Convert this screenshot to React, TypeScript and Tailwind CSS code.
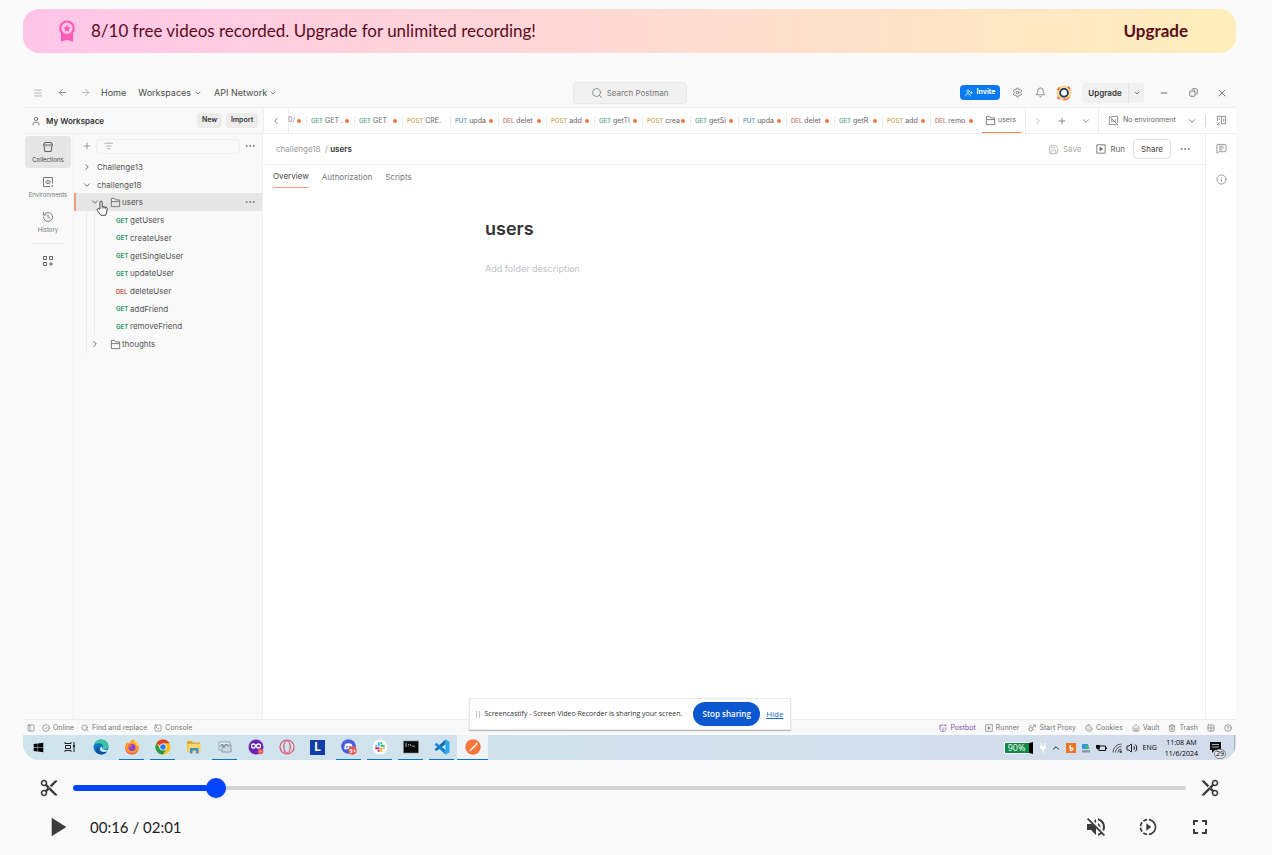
import React from "react";
import {
  ArrowLeft, ArrowRight, Bell, ChevronDown, ChevronLeft, ChevronRight, ChevronUp,
  CircleCheck, CircleHelp, Cookie, Copy, Ellipsis, Grid2x2, History, Info, ListFilter, Menu,
  MessageSquareText, Minus, PanelLeft, Plus, Save, Search, Settings, SquareTerminal, Trash2, User,
  UserPlus, Volume2, X, House,
} from "lucide-react";
import { MdContentCut, MdFullscreen, MdPlayArrow, MdSlowMotionVideo, MdVolumeOff } from "react-icons/md";
import { FaWindows } from "react-icons/fa";

type Method = "GET" | "POST" | "PUT" | "DEL";

const methodColor: Record<Method, string> = {
  GET: "text-[#4aa57c]",
  POST: "text-[#c9a24c]",
  PUT: "text-[#5a92cf]",
  DEL: "text-[#c9736b]",
};

const openTabs: { method: Method; name: string; dirty: boolean }[] = [
  { method: "GET", name: "GET .", dirty: true },
  { method: "GET", name: "GET", dirty: true },
  { method: "POST", name: "CRE.", dirty: false },
  { method: "PUT", name: "upda", dirty: true },
  { method: "DEL", name: "delet", dirty: true },
  { method: "POST", name: "add", dirty: true },
  { method: "GET", name: "getTl", dirty: true },
  { method: "POST", name: "crea", dirty: true },
  { method: "GET", name: "getSi", dirty: true },
  { method: "PUT", name: "upda", dirty: true },
  { method: "DEL", name: "delet", dirty: true },
  { method: "GET", name: "getR", dirty: true },
  { method: "POST", name: "add", dirty: true },
  { method: "DEL", name: "remo", dirty: true },
];

const requests: { method: Method; name: string }[] = [
  { method: "GET", name: "getUsers" },
  { method: "GET", name: "createUser" },
  { method: "GET", name: "getSingleUser" },
  { method: "GET", name: "updateUser" },
  { method: "DEL", name: "deleteUser" },
  { method: "GET", name: "addFriend" },
  { method: "GET", name: "removeFriend" },
];

const duration = 121;
const position = 14.7;

function Award() {
  return (
    <svg viewBox="0 0 18 22" className="h-[22px] w-[18px]">
      <path d="M3 13h12v8.500l-6-1.500-6 1.500z" fill="#ff5ab8" />
      <circle cx="9" cy="8.300" r="6.800" fill="#ffc5e4" stroke="#ff5ab8" strokeWidth="2.200" />
      <path d="M9 4.800l1.100 2.300 2.500.3-1.800 1.700.4 2.500L9 10.400l-2.200 1.200.4-2.500-1.800-1.700 2.500-.3z" fill="#ff5ab8" />
    </svg>
  );
}

function Avatar() {
  return (
    <svg viewBox="0 0 16 16" className="size-4">
      <circle cx="8" cy="8" r="7.500" fill="#f8d79a" />
      <circle cx="8" cy="7.800" r="3.900" fill="#fff" stroke="#173b57" strokeWidth="1.800" />
      <path d="M1.500 5l2-2.500M12 1.500l2 2.500M1.500 12l2 2" stroke="#f0653a" strokeWidth="1.800" />
      <path d="M7 13.500q4 1 6-2l.5 1.500q-3 3-6 2z" fill="#e8733a" />
    </svg>
  );
}

function CollectionIcon() {
  return (
    <svg viewBox="0 0 12 12" className="size-3" fill="none" stroke="#555" strokeWidth="0.900">
      <path d="M2.500 1.500h7l1 2.500h-9zM2 4l.8 6.500h6.400L10 4" />
    </svg>
  );
}

function EnvironmentIcon() {
  return (
    <svg viewBox="0 0 12 12" className="size-3" fill="none" stroke="#666" strokeWidth="0.900">
      <path d="M10.500 7.500v-6h-9v9H8" />
      <ellipse cx="6" cy="6" rx="2.200" ry="1.600" />
      <path d="M5.500 6h1M10.300 9v2" />
    </svg>
  );
}

function AppsIcon() {
  return (
    <svg viewBox="0 0 12 12" className="size-3" fill="none" stroke="#666" strokeWidth="1">
      <path d="M1.500 1.500h3v3h-3zM7.500 1.500h3v3h-3zM1.500 7.500h3v3h-3zM9 7v4M7 9h4" />
    </svg>
  );
}

function FolderTab() {
  return (
    <svg viewBox="0 0 12 12" className="size-[11px] shrink-0" fill="none" stroke="#666" strokeWidth="0.900">
      <path d="M1.500 10.500v-9h3.500l1.200 1.700h4.300v7.300zM1.500 5h9" />
    </svg>
  );
}

function NoEnvironmentIcon() {
  return (
    <svg viewBox="0 0 12 12" className="size-[11px]" fill="none" stroke="#777" strokeWidth="0.900">
      <path d="M1.500 2.500v8h8M3 1.500h7.500V9M1 1l10 10M4 4.500v3M8 4.500v3M5 7q1.500.8 2-.5" />
    </svg>
  );
}

function VariablesIcon() {
  return (
    <svg viewBox="0 0 12 12" className="size-[11px]" fill="none" stroke="#777" strokeWidth="0.900">
      <path d="M1.500 6.500v-5h9v8H6M6 1.500v8M3.500 3.500v2M8.500 3.500v4M1 8l3 3M4 8l-3 3" />
    </svg>
  );
}

function RunIcon({ className }: { className: string }) {
  return (
    <svg viewBox="0 0 12 12" className={className} fill="none" stroke="currentColor" strokeWidth="1">
      <path d="M1 1h10v10H1z" />
      <path d="M4.800 4v4l3-2z" fill="currentColor" />
    </svg>
  );
}

function PostbotIcon() {
  return (
    <svg viewBox="0 0 12 12" fill="none" stroke="currentColor" strokeWidth="1.100">
      <path d="M7 1.500A5 5 0 1 0 10.800 5M3 2l-1.500-.5V4M9.500.5v3M8 2h3" />
      <path d="M4.500 5.500v1.500M7.500 5.500v1.500M4.500 8.800h3" />
    </svg>
  );
}

function ProxyIcon() {
  return (
    <svg viewBox="0 0 12 12" fill="none" stroke="currentColor" strokeWidth="1.100">
      <circle cx="4" cy="8" r="2.800" />
      <path d="M6 6l4-4M7.500 1.500H11V5M1 4.500l2-2h2M9 7.500v2" />
    </svg>
  );
}

function HandCursor() {
  return (
    <svg viewBox="0 0 12 16" className="absolute left-5 top-[7px] z-10 h-4 w-3">
      <path
        d="M4 9V2.200a1.100 1.100 0 0 1 2.200 0V6.500l4 .8q1.100.3 1 1.500l-.7 4.200-1 2.300H5L1.200 10.500Q.6 9.200 1.800 8.800z"
        fill="#fff" stroke="#333" strokeWidth="0.900"
      />
      <path d="M6.200 6.500v2M7.900 7v1.600M9.500 7.300v1.500" stroke="#333" strokeWidth="0.700" />
    </svg>
  );
}

const appIcon = "size-4";

const taskbarApps: { name: string; running?: boolean; active?: boolean; icon: React.ReactNode }[] = [
  { name: "Start", icon: <FaWindows className="size-[11px] text-black" /> },
  {
    name: "Task view",
    icon: (
      <svg viewBox="0 0 12 12" className="size-3" fill="none" stroke="#222" strokeWidth="1">
        <path d="M1 1v1.500h6V1M1 11V9.500h6V11M1.500 4.500h5v3h-5zM10 1v10" />
        <path d="M9 4h2v2H9z" fill="#222" stroke="none" />
      </svg>
    ),
  },
  {
    name: "Edge",
    icon: (
      <svg viewBox="0 0 16 16" className={appIcon}>
        <circle cx="8" cy="8" r="7.500" fill="#1476c6" />
        <path d="M.6 7.500C1.200 3 4.300.5 8 .5c4.500 0 7.500 3 7.500 6.300 0 2.300-1.700 3.700-4 3.700-1.500 0-2.300-.6-2.300-1.200 0-.5.8-.8.8-2C10 5.500 8 4.300 5.700 4.300 3 4.300 1 6 .6 7.500z" fill="#3cc5a2" />
        <path d="M5.500 8.500c0 4 4.500 6 8.700 3.800-2 3.200-6 4-9 2.300C2 12.700 3 8 6 7.200c-.4.400-.5.8-.5 1.300z" fill="#0b4f9c" />
        <path d="M9.200 9.300c.5 1.500 3 2.300 6 1.200l-1.500 2c-3 1-6.700.2-6.700-2.300-.1-1.500 1-2.500 2.300-2.300 0 .8-.8 1-.1 1.400z" fill="#d2e8f1" />
      </svg>
    ),
  },
  {
    name: "Firefox",
    running: true,
    icon: (
      <svg viewBox="0 0 16 16" className={appIcon}>
        <path d="M8 15.300A7 7 0 0 1 1 8.500C1 6 2 4.500 3 3l.8 1.500L6 3.500C7 1.500 8.500.8 9.500.5 9.300 2 13 3 14.300 5.500 16.500 10 13.500 15.300 8 15.300z" fill="#ff9a2e" />
        <path d="M1 8c1 7 9 9 13 3-1 3-3.500 4.500-6 4.500-4 0-7-3-7-7.500z" fill="#f2385a" />
        <circle cx="8" cy="8.500" r="3.500" fill="#8146d9" />
        <path d="M4 6q3-1 5 1-3 0-3 2-2-1-2-3z" fill="#ff6a35" />
        <path d="M9.500.5c4 2 5.500 5 4.500 8-1-3-3-4-4.500-5.500z" fill="#ffd24a" />
      </svg>
    ),
  },
  {
    name: "Chrome",
    running: true,
    icon: (
      <svg viewBox="0 0 16 16" className={appIcon}>
        <circle cx="8" cy="8" r="7.500" fill="#fbc116" />
        <path d="M8 8L1.500 4.250A7.500 7.500 0 0 1 14.500 4.250H8z" fill="#e33b2e" />
        <path d="M1.500 4.250A7.500 7.500 0 0 0 8 15.500l3.200-5.600L8 8 4.800 9.900z" fill="#229a4b" />
        <circle cx="8" cy="8" r="3.600" fill="#fff" />
        <circle cx="8" cy="8" r="2.800" fill="#2b7de9" />
      </svg>
    ),
  },
  {
    name: "File Explorer",
    icon: (
      <svg viewBox="0 0 16 16" className={appIcon}>
        <path d="M1 2h5l1 1.500h7V13H1z" fill="#e6a92b" />
        <path d="M1.500 5h13v8.500h-13z" fill="#fbd766" />
        <path d="M4 14.500V9h8.500v5.500H10v-3H6.500v3z" fill="#3a8fd0" />
      </svg>
    ),
  },
  {
    name: "Monitor",
    running: true,
    icon: (
      <svg viewBox="0 0 16 16" className={appIcon}>
        <path d="M2 3h11v8H2z" fill="#e8edf0" stroke="#8a969e" strokeWidth="0.800" />
        <path d="M5 6h9v7H5z" fill="#cfd8de" stroke="#7f8c94" strokeWidth="0.800" />
        <path d="M3 8l2-3 2 4 2-4 3 3" fill="none" stroke="#5886a8" strokeWidth="0.900" />
      </svg>
    ),
  },
  {
    name: "Meet",
    icon: (
      <svg viewBox="0 0 16 16" className={appIcon}>
        <circle cx="8" cy="8" r="7.500" fill="#6b23b5" />
        <circle cx="5.500" cy="7" r="2" fill="none" stroke="#fff" strokeWidth="1.300" />
        <circle cx="10.500" cy="7" r="2" fill="none" stroke="#fff" strokeWidth="1.300" />
        <circle cx="12.500" cy="12.500" r="2.800" fill="#ec4f5a" />
        <circle cx="12.500" cy="12.500" r="1" fill="#ffc14d" />
      </svg>
    ),
  },
  {
    name: "Opera",
    icon: (
      <svg viewBox="0 0 16 16" className={appIcon} fill="none" stroke="#dc5570">
        <circle cx="8" cy="8" r="7" strokeWidth="1.200" />
        <ellipse cx="8" cy="8" rx="3.200" ry="6" strokeWidth="1.200" />
      </svg>
    ),
  },
  {
    name: "L",
    icon: (
      <span className="flex size-[15px] items-center justify-center bg-[#123cab] font-['Open_Sans',sans-serif] text-xs font-bold text-white">L</span>
    ),
  },
  {
    name: "Discord",
    running: true,
    icon: (
      <svg viewBox="0 0 16 16" className={appIcon}>
        <circle cx="7.500" cy="7.500" r="7.300" fill="#4c5ce0" />
        <path d="M4.500 4.800q3-1.200 6 0 1.500 2.500 1.300 5L10 11l-.7-1.200q-1.800.4-3.600 0L5 11l-1.800-1.200q-.2-2.500 1.300-5z" fill="#fff" />
        <circle cx="6" cy="7.800" r="0.900" fill="#4c5ce0" />
        <circle cx="9" cy="7.800" r="0.900" fill="#4c5ce0" />
        <circle cx="11.500" cy="11.500" r="4.300" fill="#e9574e" />
        <path d="M9 10.500h1.800v3H9M9 10.500v1.500h1.800M12.300 12h2.600M13.600 10.700v2.600" fill="none" stroke="#fff" strokeWidth="0.800" />
      </svg>
    ),
  },
  {
    name: "Slack",
    running: true,
    icon: (
      <svg viewBox="0 0 16 16" className={appIcon} strokeWidth="1.900" strokeLinecap="round">
        <circle cx="8" cy="8" r="7.500" fill="#fff" />
        <path d="M6.700 4v2.700M4 6.700h.2" stroke="#36c5f0" />
        <path d="M9.300 6.700H12M9.300 4v.2" stroke="#2eb67d" />
        <path d="M9.300 9.300V12M12 9.300h-.2" stroke="#ecb22e" />
        <path d="M4 9.300h2.700M6.700 12v-.2" stroke="#e01e5a" />
      </svg>
    ),
  },
  {
    name: "Command Prompt",
    running: true,
    icon: (
      <svg viewBox="0 0 16 16" className={appIcon}>
        <path d="M.5 2h15v12H.5z" fill="#0a0a0a" stroke="#888" strokeWidth="0.600" />
        <path d="M2 5h2M2 7h2M5.500 5v.8M5.500 6.500v.8M7 5l1 2.200M9 7.200h2.500" stroke="#ddd" strokeWidth="0.800" />
      </svg>
    ),
  },
  {
    name: "Visual Studio Code",
    running: true,
    icon: (
      <svg viewBox="0 0 16 16" className={appIcon}>
        <path d="M11.500.5L15.500 2.500v11l-4 2z" fill="#2aa7ee" />
        <path d="M11.500.5v4.800L2.500 12 .5 10.500z" fill="#0f6fb8" />
        <path d="M11.500 15.500v-4.800L2.500 4 .5 5.500z" fill="#1286d2" />
      </svg>
    ),
  },
  {
    name: "Postman",
    running: true,
    active: true,
    icon: (
      <svg viewBox="0 0 16 16" className={appIcon}>
        <circle cx="8" cy="8" r="7.700" fill="#f9763a" />
        <path d="M3.500 12.500l6.500-7 1.500 1L6 11.500zM10.300 5l1.200-1.400 1.300 1.300-1.200 1.400z" fill="#fff" />
      </svg>
    ),
  },
];

function RailItem({ label, active, children }: { label: string; active?: boolean; children: React.ReactNode }) {
  return (
    <button
      className={`flex h-8 w-[46px] flex-col items-center justify-center gap-[3px] rounded-sm text-[6px] leading-[8px] ${
        active ? "bg-[#e6e6e6] text-[#444]" : "text-[#777]"
      }`}
    >
      {children}
      {label}
    </button>
  );
}

function TitleBar() {
  return (
    <header className="flex h-[30px] shrink-0 items-center justify-between border-b border-[#eeeeee] text-[9px]">
      <nav className="flex flex-1 items-center text-[#4a4a4a]">
        <button aria-label="Menu" className="ml-2.5"><Menu className="size-2.5 text-[#888]" strokeWidth={1.5} /></button>
        <button aria-label="Back" className="ml-3.5"><ArrowLeft className="size-[11px] text-[#777]" strokeWidth={1.8} /></button>
        <button aria-label="Forward" className="ml-3"><ArrowRight className="size-[11px] text-[#aaa]" strokeWidth={1.8} /></button>
        <a href="#home" className="ml-2.5">Home</a>
        <button className="ml-3 flex items-center gap-[3px]">Workspaces <ChevronDown className="size-2" /></button>
        <button className="ml-3 flex items-center gap-0.5">API Network <ChevronDown className="size-2" /></button>
      </nav>
      <button className="flex h-[22px] w-[114px] items-center justify-center gap-1 rounded-sm border border-[#e9e9e9] bg-[#f1f1f1] text-[8px] text-[#777]">
        <Search className="size-3" strokeWidth={1.5} />
        Search Postman
      </button>
      <div className="flex flex-1 items-center justify-end">
        <button className="flex h-[15px] w-10 items-center justify-center gap-1 rounded-sm bg-[#0a7bee] text-[7px] font-bold text-white">
          <UserPlus className="size-2" /> Invite
        </button>
        <button aria-label="Settings" className="ml-3"><Settings className="size-[11px] text-[#666]" strokeWidth={1.6} /></button>
        <button aria-label="Notifications" className="ml-3"><Bell className="size-[11px] text-[#666]" strokeWidth={1.6} /></button>
        <span className="ml-2.5"><Avatar /></span>
        <button className="ml-2.5 h-5 w-[46px] rounded-l-sm bg-[#f1f1f1] text-[8px] font-semibold text-[#333]">Upgrade</button>
        <button aria-label="Upgrade options" className="flex h-5 w-4 items-center justify-center rounded-r-sm border-l border-[#e2e2e2] bg-[#f1f1f1]">
          <ChevronDown className="size-2 text-[#444]" />
        </button>
        <button aria-label="Minimize" className="ml-[15px]"><Minus className="size-2.5 text-[#555]" /></button>
        <button aria-label="Restore" className="ml-5"><Copy className="size-[9px] -scale-x-100 text-[#555]" /></button>
        <button aria-label="Close" className="ml-[18px] mr-2"><X className="size-3 text-[#555]" strokeWidth={1.6} /></button>
      </div>
    </header>
  );
}

function TabStrip() {
  return (
    <div className="flex h-[26px] shrink-0 border-b border-[#eeeeee]">
      <div className="flex w-60 shrink-0 items-center gap-1 pl-2 pr-[5px]">
        <User className="size-2.5 text-[#555]" strokeWidth={1.8} />
        <span className="flex-1 pl-px text-[8px] font-semibold leading-3 text-[#333]">My Workspace</span>
        <button className="h-[15px] w-[25px] rounded-sm bg-[#ececec] text-[7px] font-semibold text-[#333]">New</button>
        <button className="h-[15px] w-8 rounded-sm bg-[#ececec] text-[7px] font-semibold text-[#333]">Import</button>
      </div>
      <div className="flex min-w-0 flex-1 items-center bg-white">
        <button aria-label="Previous tabs" className="flex h-full w-[26px] shrink-0 items-center justify-center border-x border-[#efefef]">
          <ChevronLeft className="size-2.5 text-[#666]" />
        </button>
        <div className="flex w-[17px] shrink-0 items-center justify-end gap-0.5 pr-[5px] text-[7px] text-[#888]">
          <span>0/</span>
          <i className="size-1 shrink-0 rounded-full bg-[#f3733a]" />
        </div>
        {openTabs.map((tab, i) => (
          <button key={i} className="flex h-3 w-12 shrink-0 items-center border-l border-[#ededed] pl-1 pr-[5px]">
            <span className={`mr-0.5 text-[6px] font-medium ${methodColor[tab.method]}`}>{tab.method}</span>
            <span className="flex-1 whitespace-nowrap text-left text-[7px] leading-3 text-[#666]">{tab.name}</span>
            {tab.dirty && <i className="size-1 shrink-0 rounded-full bg-[#f3733a]" />}
          </button>
        ))}
        <button className="flex h-full w-12 shrink-0 items-center border-r border-[#ededed] px-1">
          <span className="flex h-full flex-1 items-center gap-0.5 border-b border-[#f08a5c] pl-[3px] text-[7px] text-[#666]">
            <FolderTab /> users
          </span>
        </button>
        <div className="flex h-full flex-1 items-center justify-around border-r border-[#ededed] text-[#777]">
          <button aria-label="Next tabs"><ChevronRight className="size-2.5 text-[#aaa]" /></button>
          <button aria-label="New tab"><Plus className="size-2.5" /></button>
          <button aria-label="Tab options"><ChevronDown className="size-2.5" /></button>
        </div>
        <button className="flex h-full w-[106px] shrink-0 items-center gap-1 pl-[9px] pr-2 text-[7px] text-[#666]">
          <NoEnvironmentIcon />
          <span className="flex-1 whitespace-nowrap text-left">No environment</span>
          <ChevronDown className="size-2.5" />
        </button>
        <button aria-label="Variables" className="flex h-3 w-[31px] shrink-0 items-center justify-center border-l border-[#d5d5d5]">
          <VariablesIcon />
        </button>
      </div>
    </div>
  );
}

function Sidebar() {
  return (
    <aside className="flex w-60 shrink-0">
      <nav className="flex w-[51px] shrink-0 flex-col items-center gap-[3px] border-r border-[#f0f0f0] pt-0.5">
        <RailItem label="Collections" active><CollectionIcon /></RailItem>
        <RailItem label="Environments"><EnvironmentIcon /></RailItem>
        <RailItem label="History"><History className="size-3 text-[#666]" strokeWidth={1.600} /></RailItem>
        <hr className="mt-0.5 w-8 border-[#ececec]" />
        <button aria-label="Configure sidebar" className="mt-2"><AppsIcon /></button>
      </nav>
      <div className="min-w-0 flex-1 border-r border-[#f1f1f1]">
        <div className="flex h-6 items-center pl-2 pr-1.5">
          <button aria-label="Add"><Plus className="size-2.5 text-[#777]" strokeWidth={1.6} /></button>
          <label className="ml-1 flex h-[15px] flex-1 items-center rounded-sm border border-[#efefef] pl-[7px]">
            <ListFilter className="size-2.5 text-[#888]" strokeWidth={1.600} />
            <input aria-label="Filter collections" className="w-full bg-transparent text-[8px] outline-none" />
          </label>
          <button aria-label="More" className="ml-1"><Ellipsis className="size-3 text-[#777]" /></button>
        </div>
        <ul className="flex h-[195px] flex-col text-[8px] text-[#555] *:flex *:flex-1 *:items-center">
          <li className="pl-2"><ChevronRight className="mr-[5px] size-2.5" />Challenge13</li>
          <li className="pl-2"><ChevronDown className="mr-[5px] size-2.5" />challenge18</li>
          <li className="relative border-l-2 border-[#ee9d78] bg-[#e6e6e6] pl-3.5 pr-1.5">
            <ChevronDown className="mr-2.5 size-2.5" />
            <HandCursor />
            <FolderTab />
            <span className="ml-px flex-1">users</span>
            <Ellipsis className="size-3 text-[#777]" />
          </li>
          {requests.map((request) => (
            <li key={request.name} className="ml-3 border-l border-[#ececec]">
              <span className="ml-[7px] flex h-full items-center border-l border-[#ececec] pl-[21px]">
                <span className={`w-3.5 text-[6px] font-bold ${request.method === "DEL" ? "text-[#c9604f]" : "text-[#2f9a68]"}`}>
                  {request.method}
                </span>
                {request.name}
              </span>
            </li>
          ))}
          <li className="ml-3 border-l border-[#ececec] pl-[3px]">
            <ChevronRight className="mr-2.5 size-2.5" />
            <FolderTab />
            <span className="ml-px">thoughts</span>
          </li>
        </ul>
      </div>
    </aside>
  );
}

function FolderPage() {
  return (
    <main className="flex min-w-0 flex-1 flex-col bg-white">
      <div className="flex h-[31px] shrink-0 items-center border-b border-[#f1f1f1] pl-[13px] pr-3.5 text-[8px] text-[#777]">
        <p className="flex-1 text-[#999]">challenge18&nbsp; / <b className="font-semibold text-[#333]">users</b></p>
        <button className="flex items-center gap-1 text-[#aaa]"><Save className="size-[11px]" strokeWidth={1.600} />Save</button>
        <button className="ml-[15px] flex items-center gap-1 text-[#666]"><RunIcon className="size-2.5" />Run</button>
        <button className="ml-2 h-5 w-[38px] rounded-sm border border-[#dedede] text-[#444]">Share</button>
        <button aria-label="More actions" className="ml-2"><Ellipsis className="size-3" /></button>
      </div>
      <div className="flex h-[23px] gap-[13px] pl-2.5 text-[8px] text-[#777]">
        <button className="border-b border-[#f0a587] text-[#444]">Overview</button>
        <button>Authorization</button>
        <button>Scripts</button>
      </div>
      <section className="ml-[222px] mt-7">
        <h1 className="text-lg font-semibold leading-[26px] text-[#333]">users</h1>
        <p className="mt-5 text-[9px] text-[#c4c4c4]">Add folder description</p>
      </section>
    </main>
  );
}

function StatusBar() {
  return (
    <footer className="flex h-4 shrink-0 items-center justify-between border-t border-[#ececec] px-1 text-[7px] text-[#777] [&_svg]:size-2 [&_button]:flex [&_button]:items-center [&_button]:gap-[3px]">
      <div className="flex gap-[7px]">
        <button aria-label="Sidebar"><PanelLeft /></button>
        <button><CircleCheck />Online</button>
        <button><Search />Find and replace</button>
        <button><SquareTerminal />Console</button>
      </div>
      <div className="flex gap-[9px]">
        <button className="text-[#7a55a8]"><PostbotIcon />Postbot</button>
        <button><RunIcon className="size-2" />Runner</button>
        <button><ProxyIcon />Start Proxy</button>
        <button><Cookie />Cookies</button>
        <button><House />Vault</button>
        <button><Trash2 />Trash</button>
        <button aria-label="Layout"><Grid2x2 /></button>
        <button aria-label="Help"><CircleHelp /></button>
      </div>
    </footer>
  );
}

function Taskbar() {
  return (
    <div className="flex h-[25px] shrink-0 items-center justify-between bg-linear-to-r from-[#cfe5ee] to-[#d3dceb] font-['Open_Sans',sans-serif] text-black">
      <div className="flex h-full">
        {taskbarApps.map((app) => (
          <button
            key={app.name}
            aria-label={app.name}
            className={`flex h-full w-[31px] flex-col items-center ${app.active ? "bg-[#eef4f8]" : ""}`}
          >
            <span className="flex flex-1 items-center">{app.icon}</span>
            <span className={`h-px ${app.active ? "w-full" : "w-[25px]"} ${app.running ? "bg-[#0f74c8]" : ""}`} />
          </button>
        ))}
      </div>
      <div className="flex h-full items-center text-[7px]">
        <span className="flex h-3 w-[29px] items-center justify-center border border-white border-r-4 border-r-black bg-[#0c8a45] text-[9px] text-white">90%</span>
        <svg viewBox="0 0 8 10" className="ml-1.5 h-2.5 w-2"><path d="M2 0v3M6 0v3M4 6v4" stroke="#fff" /><path d="M1 3h6v2L4 7.500 1 5z" fill="#fff" /></svg>
        <ChevronUp className="ml-1 size-2.5" />
        <svg viewBox="0 0 10 10" className="ml-[5px] size-2.5"><path d="M0 0h10v10H0z" fill="#ea7420" /><path d="M4.500 8V2.500L3 3.500M3 5h4.500M5 5l2.500 1.500L4 8" fill="none" stroke="#fff" /></svg>
        <svg viewBox="0 0 10 10" className="ml-[5px] size-2.5"><path d="M1 1h6v5H1z" fill="#2f9bdc" /><path d="M4 5l3-4 1.500 5z" fill="#4db06a" /><path d="M1 7h8v2.500H1z" fill="#8e9aa4" /></svg>
        <svg viewBox="0 0 12 10" className="ml-1 h-2.5 w-3"><path d="M4 3h6.500v4.500H4z" fill="none" stroke="#111" /><path d="M11 4.500h1v1.500h-1zM1 2h4v3L3.500 6.500H2.500L1 5z" fill="#111" /></svg>
        <svg viewBox="0 0 10 10" className="ml-[5px] size-2.5" fill="none" stroke="#555"><path d="M1 9.500A8.500 8.500 0 0 1 9.500 1M3.500 9.500a6 6 0 0 1 6-6M6 9.500A3.500 3.500 0 0 1 9.500 6" /><path d="M8 8h1.500v1.500H8z" fill="#111" /></svg>
        <Volume2 className="ml-1 size-3" strokeWidth={1.800} />
        <span className="ml-[5px]">ENG</span>
        <span className="ml-2 whitespace-nowrap text-center leading-[11px]">11:08 AM<br />11/6/2024</span>
        <span className="relative ml-3 mr-2 w-4">
          <svg viewBox="0 0 12 11" className="h-[11px] w-3"><path d="M0 0h11v8H5l-3 3V8H0z" fill="#111" /><path d="M2 2.500h7M2 5h7" stroke="#cfdae6" strokeWidth="0.800" /></svg>
          <span className="absolute -bottom-1.5 left-1 flex h-2.5 w-3 items-center justify-center rounded-full border border-[#888] bg-[#dde3ea] text-[7px]">29</span>
        </span>
        <span className="h-full w-0.5 border-l border-[#a4b2c4]" />
      </div>
    </div>
  );
}

function Recording() {
  return (
    <section className="relative mt-[25px] flex aspect-video w-full flex-col overflow-hidden rounded-b-2xl bg-[#f9f9f9] font-['Inter',sans-serif]">
      <TitleBar />
      <TabStrip />
      <div className="flex min-h-0 flex-1">
        <Sidebar />
        <FolderPage />
        <aside className="flex w-[31px] shrink-0 flex-col items-center gap-5 border-l border-[#eeeeee] bg-white pt-[9px] text-[#777]">
          <button aria-label="Comments"><MessageSquareText className="size-[11px]" strokeWidth={1.600} /></button>
          <button aria-label="Details"><Info className="size-[11px]" strokeWidth={1.600} /></button>
        </aside>
      </div>
      <StatusBar />
      <Taskbar />
      <div className="absolute bottom-[30px] left-1/2 flex h-8 w-[322px] -translate-x-1/2 items-center border border-[#e8e8e8] bg-white pl-1.5 font-['Open_Sans',sans-serif] text-[7px] text-[#333] shadow-[0_1px_1px_#bbb]">
        <span className="h-[7px] w-1 shrink-0 border-x border-[#c4c4c4]" />
        <span className="ml-[5px] flex-1 whitespace-nowrap">Screencastify - Screen Video Recorder is sharing your screen.</span>
        <button className="h-6 w-[67px] shrink-0 whitespace-nowrap rounded-full bg-[#0b57d0] text-[8px] font-semibold text-white">Stop sharing</button>
        <a href="#hide" className="mx-1.5 text-[8px] text-[#1a67d2] underline">Hide</a>
      </div>
    </section>
  );
}

function Player() {
  const percent = (position / duration) * 100;
  return (
    <section className="font-['Lato',sans-serif] text-[#3c3c3c]">
      <div className="mt-4 flex h-6 items-center px-4">
        <button aria-label="Trim start"><MdContentCut className="size-5" /></button>
        <div className="relative mx-3.5 flex h-6 flex-1 items-center">
          <span className="h-1 w-full rounded-full bg-[#d4d4d4]" />
          <span className="absolute left-0 h-1.5 rounded-full bg-[#0044ff]" style={{ width: `${percent}%` }} />
          <input
            type="range" aria-label="Playback position" min={0} max={duration} step={0.1} defaultValue={position}
            className="absolute inset-0 w-full cursor-pointer appearance-none bg-transparent [&::-webkit-slider-thumb]:size-5 [&::-webkit-slider-thumb]:appearance-none [&::-webkit-slider-thumb]:rounded-full [&::-webkit-slider-thumb]:bg-[#0044ff] [&::-webkit-slider-thumb]:shadow"
          />
        </div>
        <button aria-label="Trim end"><MdContentCut className="size-5 -scale-x-100" /></button>
      </div>
      <div className="mt-[11px] flex h-8 items-center pl-[18px]">
        <button aria-label="Play"><MdPlayArrow className="size-8" /></button>
        <span className="ml-[17px] flex-1 text-[15px] text-[#222]">00:16 / 02:01</span>
        <div className="mr-6 flex items-center gap-7">
          <button aria-label="Unmute"><MdVolumeOff className="size-6" /></button>
          <button aria-label="Playback speed"><MdSlowMotionVideo className="size-6 p-0.5" /></button>
          <button aria-label="Full screen"><MdFullscreen className="size-6" /></button>
        </div>
      </div>
    </section>
  );
}

export default function App() {
  return (
    <div className="min-h-screen bg-[#fafafa] pl-[23px] pr-9 pt-[9px]">
      <div className="flex h-11 items-center rounded-2xl bg-linear-to-r from-[#ffc5e8] to-[#ffeebb] pl-[35px] pr-12 font-['Lato',sans-serif] text-[17px] text-[#5b0a1c]">
        <Award />
        <p className="ml-[15px] flex-1">8/10 free videos recorded. Upgrade for unlimited recording!</p>
        <a href="#upgrade" className="font-bold">Upgrade</a>
      </div>
      <Recording />
      <Player />
    </div>
  );
}
